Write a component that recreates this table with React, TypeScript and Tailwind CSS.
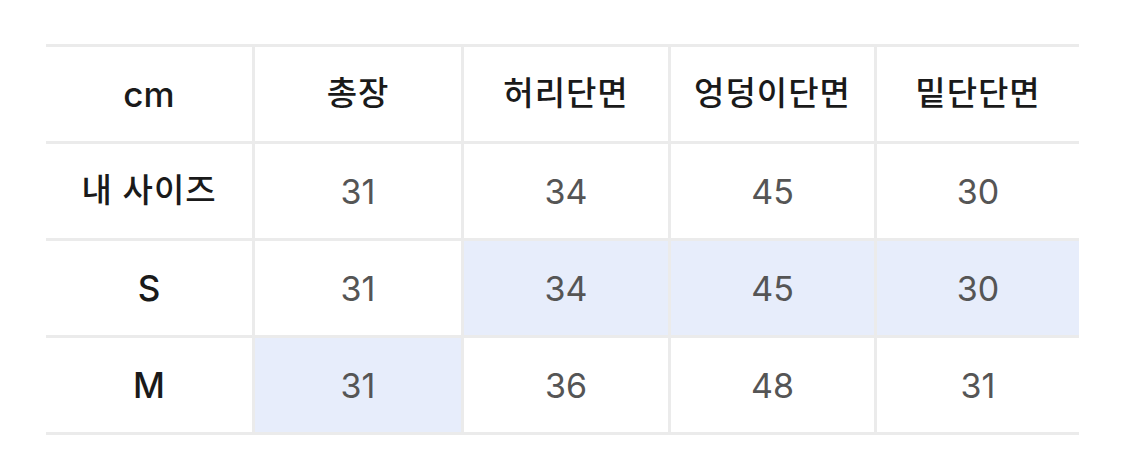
import React from 'react';

const headers = ['cm', '총장', '허리단면', '엉덩이단면', '밑단단면'];

const rows: { label: string; values: string[]; hl: boolean[] }[] = [
  { label: '내 사이즈', values: ['31', '34', '45', '30'], hl: [false, false, false, false] },
  { label: 'S', values: ['31', '34', '45', '30'], hl: [false, true, true, true] },
  { label: 'M', values: ['31', '36', '48', '31'], hl: [true, false, false, false] },
];

const font = { fontFamily: 'Inter, "Noto Sans CJK KR", sans-serif' };

// latin labels run a little larger than the hangul ones
const labelCls = (t: string) =>
  /^[A-Za-z]+$/.test(t) ? 'text-[35px] font-medium' : 'text-[33px] font-medium tracking-[1px]';

export default function App() {
  return (
    <div className="w-[1125px] h-[476px] bg-white pt-[44px] pl-[46px]" style={font}>
      <div className="w-[1033px] border-t-[3px] border-[#ebebeb]">
        <div className="grid grid-cols-[206px_209px_207px_206px_205px] h-[97px] border-b-[3px] border-[#ebebeb]">
          {headers.map((h, i) => (
            <div
              key={h}
              className={
                'flex items-center justify-center text-[#1a1a1a] ' +
                labelCls(h) +
                (i > 0 ? ' border-l-[3px] border-[#ebebeb]' : '')
              }
            >
              {h}
            </div>
          ))}
        </div>
        {rows.map((r) => (
          <div
            key={r.label}
            className="grid grid-cols-[206px_209px_207px_206px_205px] h-[97px] border-b-[3px] border-[#ebebeb]"
          >
            <div className={'flex items-center justify-center text-[#1a1a1a] ' + labelCls(r.label)}>
              {r.label}
            </div>
            {r.values.map((v, i) => (
              <div
                key={i}
                className={
                  'flex items-center justify-center text-[34px] text-[#555] border-l-[3px] border-[#ebebeb] ' +
                  (r.hl[i] ? 'bg-[#e7edfb]' : '')
                }
              >
                {v}
              </div>
            ))}
          </div>
        ))}
      </div>
    </div>
  );
}
